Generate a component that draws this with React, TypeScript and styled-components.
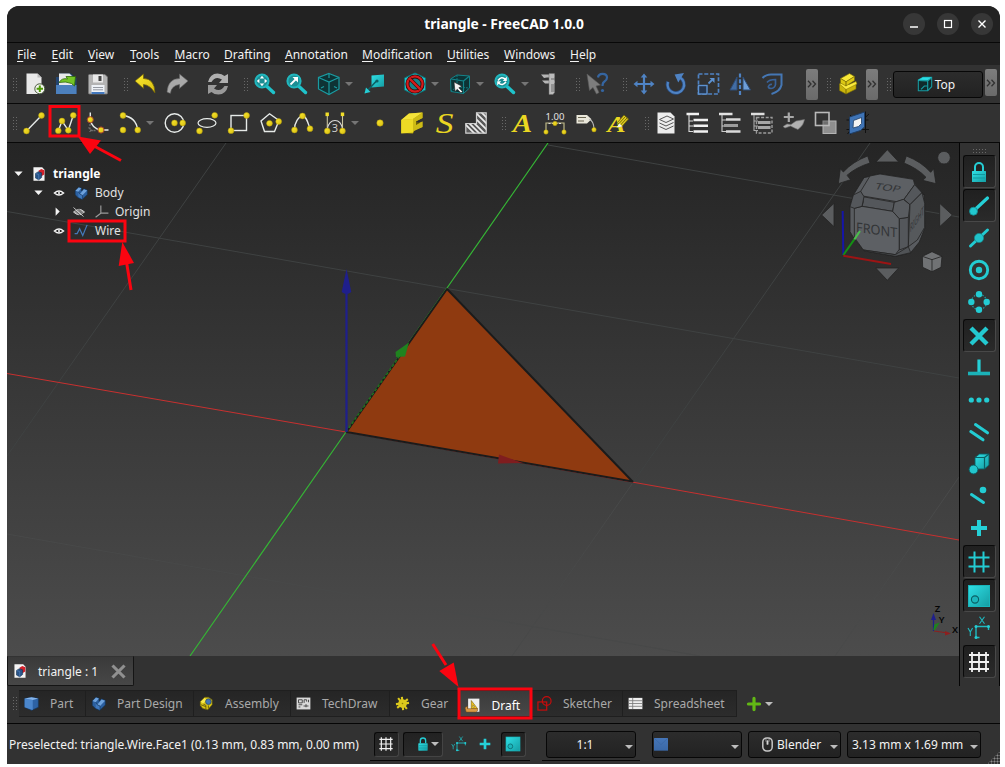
import React from "react";
import styled, { createGlobalStyle, css } from "styled-components";

const GlobalStyle = createGlobalStyle`
  html, body { margin: 0; padding: 0; background: #fff; }
  body { width: 1005px; height: 767px; overflow: hidden; }
  * { box-sizing: border-box; }
  svg { display: block; flex: none; }
`;

/* ---------- frame ---------- */
const Page = styled.div`
  position: relative;
  width: 1005px;
  height: 767px;
  padding: 6px 5px 3px 7px;
  background: #fff;
  font-family: "Noto Sans", sans-serif;
  font-size: 12px;
  color: #f2f2f2;
`;
const Window = styled.div`
  display: flex;
  flex-direction: column;
  width: 993px;
  height: 758px;
  background: #323232;
  border-radius: 12px 12px 0 0;
  overflow: hidden;
`;
const TitleBar = styled.header`
  display: grid;
  grid-template-columns: 1fr auto 1fr;
  align-items: center;
  height: 37px;
  background: #222;
  border-bottom: 1px solid #080808;
`;
const Title = styled.div`
  grid-column: 2;
  padding: 0 0 2px 1px;
  font-size: 13.8px;
  font-weight: 700;
  color: #fff;
`;
const WindowButtons = styled.div`
  display: flex;
  justify-content: flex-end;
  gap: 12px;
  padding-right: 7px;
`;
const RoundButton = styled.div`
  display: flex;
  align-items: center;
  justify-content: center;
  width: 22px;
  height: 22px;
  border-radius: 50%;
  background: #373737;
`;
const MenuBar = styled.nav`
  display: flex;
  align-items: center;
  height: 22px;
  padding-left: 10px;
  background: #232323;
`;
const MenuItem = styled.div<{ $w: number }>`
  width: ${(p) => p.$w}px;
  padding-top: 2px;
  font-size: 12px;
  white-space: nowrap;
  line-height: 22px;
  u { text-underline-offset: 2px; }
`;
const Toolbar = styled.div`
  display: flex;
  align-items: center;
  height: 39px;
  background: #323232;
  border-bottom: 1px solid #080808;
`;
const dots = css`
  background-image: radial-gradient(circle, #686868 0.7px, transparent 0.95px);
  background-size: 3px 3px;
`;
const Grip = styled.div<{ $gap: number }>`
  flex: none;
  width: 6px;
  height: 15px;
  margin-left: ${(p) => p.$gap}px;
  ${dots}
`;
const Slot = styled.div<{ $gap?: number }>`
  flex: none;
  display: flex;
  align-items: center;
  justify-content: center;
  width: 32px;
  height: 32px;
  margin-left: ${(p) => p.$gap ?? 0}px;
`;
const DropArrow = styled.span<{ $w?: number; $light?: boolean }>`
  flex: none;
  display: block;
  width: ${(p) => p.$w ?? 13}px;
  &::before {
    content: "";
    display: block;
    width: 0;
    border: 4px solid transparent;
    border-bottom-width: 0;
    border-top: 4px solid ${(p) => (p.$light ? "#bdbdbd" : "#757575")};
  }
`;
const Extender = styled.div<{ $gap: number; $lift?: number }>`
  flex: none;
  display: flex;
  align-items: center;
  justify-content: center;
  width: 12px;
  height: ${(p) => (p.$lift ? 27 : 31)}px;
  margin: 0 0 ${(p) => p.$lift ?? 0}px ${(p) => p.$gap}px;
  border-radius: 2px;
  background: linear-gradient(#7d7d7d, #6a6a6a);
`;
const raised = css`
  border: 1px solid #070707;
  border-radius: 3px;
  background: linear-gradient(#2c2c2c, #222);
`;
const ViewButton = styled.div`
  flex: none;
  display: flex;
  align-items: center;
  justify-content: center;
  gap: 2px;
  width: 90px;
  height: 27px;
  margin-left: 1px;
  padding-right: 4px;
  font-size: 12px;
  ${raised}
`;

/* ---------- centre ---------- */
const Middle = styled.div`
  display: flex;
  height: 543px;
`;
const Centre = styled.main`
  width: 952px;
`;
const Viewport = styled.div`
  position: relative;
  height: 513px;
  background: linear-gradient(#252525, #4c4c4c);
`;
const Tree = styled.div`
  position: absolute;
  left: 0;
  top: 21px;
`;
const TreeRow = styled.div<{ $indent: number; $bold?: boolean }>`
  display: flex;
  align-items: center;
  height: 19px;
  padding-left: ${(p) => p.$indent}px;
  font-size: 12px;
  font-weight: ${(p) => (p.$bold ? 700 : 400)};
  color: ${(p) => (p.$bold ? "#fff" : "#e2e2e2")};
`;
const TreeCell = styled.span<{ $w: number }>`
  display: flex;
  flex: none;
  align-items: center;
  justify-content: center;
  width: ${(p) => p.$w}px;
`;
const DocTabs = styled.div`
  display: flex;
  height: 30px;
  background: #323232;
`;
const DocTab = styled.div`
  display: flex;
  align-items: center;
  width: 127px;
  height: 30px;
  padding-left: 5px;
  background: linear-gradient(#3a3a3a, #474747);
  border: 1px solid #151515;
  border-top-color: #333;
  border-radius: 0 0 2px 2px;
  font-size: 12px;
`;
const DocName = styled.span`
  width: 72px;
  margin-left: 11px;
`;
const SnapBar = styled.aside`
  display: flex;
  flex-direction: column;
  width: 41px;
  padding: 5px 0 0 3px;
  background: #323232;
  border-left: 1px solid #050505;
  border-right: 1px solid #050505;
`;
const SideGrip = styled.div`
  width: 15px;
  height: 6px;
  margin-left: 9px;
  ${dots}
`;
const SnapButton = styled.div<{ $on?: boolean }>`
  flex: none;
  display: flex;
  align-items: center;
  justify-content: center;
  width: 33px;
  height: ${(p) => (p.$on ? 33 : 32)}px;
  margin-top: ${(p) => (p.$on ? 1 : 0)}px;
  padding-right: 1px;
  ${(p) =>
    p.$on &&
    css`
      border: 1px solid #0a0a0a;
      border-right-color: #484848;
      border-bottom-color: #484848;
      border-radius: 3px;
      background: linear-gradient(#202020, #2a2a2a);
    `}
`;

/* ---------- bottom ---------- */
const Workbenches = styled.div`
  display: flex;
  align-items: center;
  height: 38px;
  padding-bottom: 2px;
  border-bottom: 1px solid #050505;
`;
const BenchTabs = styled.div`
  display: flex;
  margin-left: 1px;
`;
const BenchTab = styled.div<{ $w: number; $active?: boolean }>`
  display: flex;
  align-items: center;
  width: ${(p) => p.$w}px;
  height: 27px;
  padding: ${(p) => (p.$active ? "3px 0 0 7px" : "0 0 0 5px")};
  gap: ${(p) => (p.$active ? 11.5 : 11)}px;
  border: 1px solid #1f1f1f;
  border-left-width: 0;
  background: ${(p) => (p.$active ? "linear-gradient(#3a3a3a, #484848)" : "linear-gradient(#252525, #2c2c2c)")};
  color: ${(p) => (p.$active ? "#fff" : "#a9a9a9")};
  font-size: 12px;
  white-space: nowrap;
`;
const AddBench = styled.div`
  display: flex;
  align-items: center;
  gap: 4px;
  margin-left: 10px;
`;
const StatusBar = styled.footer`
  position: relative;
  display: flex;
  height: 40px;
  padding-left: 2px;
  background: #323232;
`;
const Message = styled.div`
  width: 361px;
  line-height: 41px;
  letter-spacing: -0.01px;
  white-space: nowrap;
`;
const Group = styled.div<{ $w: number; $gap?: number; $line?: boolean }>`
  display: flex;
  align-items: center;
  width: ${(p) => p.$w}px;
  height: ${(p) => (p.$line ? 37 : 38)}px;
  margin-left: ${(p) => p.$gap ?? 0}px;
  padding: 4px 4px 0;
  border-bottom: 1px solid ${(p) => (p.$line ? "#070707" : "transparent")};
`;
const SmallButton = styled.div<{ $w: number; $gap?: number; $flat?: boolean; $menu?: boolean }>`
  flex: none;
  display: flex;
  align-items: center;
  justify-content: ${(p) => (p.$menu ? "flex-end" : "center")};
  width: ${(p) => p.$w}px;
  height: 25px;
  margin-left: ${(p) => p.$gap ?? 0}px;
  padding-right: ${(p) => (p.$menu ? 3 : 1)}px;
  border: 1px solid transparent;
  ${(p) =>
    !p.$flat &&
    css`
      border-color: #0a0a0a #444 #444 #0a0a0a;
      border-radius: 3px;
      background: linear-gradient(#222, #2a2a2a);
    `}
`;
const Combo = styled.div<{ $w: number; $gap?: number; $center?: boolean }>`
  flex: none;
  display: flex;
  align-items: center;
  width: ${(p) => p.$w}px;
  height: 27px;
  margin-left: ${(p) => p.$gap ?? 0}px;
  padding: 0 2px 0 4px;
  white-space: nowrap;
  ${raised}
  & > span:first-child { flex: 1; text-align: ${(p) => (p.$center ? "center" : "left")}; padding-right: ${(p) => (p.$center ? 6 : 0)}px; }
  & > span:last-child { padding-top: 5px; }
`;
const BlankLabel = styled.span`
  margin-left: -4px;
`;
const MouseLabel = styled.span`
  display: flex;
  align-items: center;
  gap: 2px;
  padding-left: 7px;
`;
const SizeGrip = styled.div`
  position: absolute;
  right: 0;
  bottom: 0;
  width: 13px;
  height: 13px;
  clip-path: polygon(100% 0, 100% 100%, 0 100%);
  background-image: radial-gradient(circle, #8a8a8a 0.9px, transparent 1.1px);
  background-size: 3px 3px;
`;
const Overlay = styled.svg`
  position: absolute;
  left: 0;
  top: 0;
  pointer-events: none;
`;

/* ---------- icons ---------- */
const W = "#e6eae8";
const C = "url(#cyan)";
const CD = "#0b5f64";
const B = "#4f83c4";
const dot = (x: number, y: number, r = 2.9) => (
  <circle key={`${x}-${y}`} cx={x} cy={y} r={r} fill="url(#yellow)" stroke="#b39a08" strokeWidth=".5" />
);
const stroke = (d: string, c = W, w = 1.4, extra = {}) => <path d={d} fill="none" stroke={c} strokeWidth={w} {...extra} />;

const planeCube = (
  <>
    <path d="M2.500 7L9 3L21.500 4V16L15.500 21.500L3 19.500Z" fill="#0d3335" stroke="#148389" />
    <path d="M3 7L15.500 9V21.500M15.500 9L21.500 4" fill="none" stroke="#148389" strokeWidth="1.200" />
    <path d="M9 3v12l-6 4M9 15l12 1" fill="none" stroke="#118085" strokeWidth=".9" strokeDasharray="2 1" />
  </>
);
const lens = (
  <>
    <path d="M13.500 14L20.500 20.500" stroke="#1fc3cb" strokeWidth="3.400" strokeLinecap="round" />
    <circle cx="9" cy="9" r="6.600" fill="#1b8e94" stroke="#21b6bd" strokeWidth="2" />
  </>
);
const miniLock = (
  <>
    <path d="M8 11V7a4 4 0 0 1 8 0v4" fill="none" stroke="#25cdd4" strokeWidth="2" />
    <rect x="5" y="11" width="14" height="11" rx=".6" fill={C} />
    <path d="M6 14.500h12M6 18h12" stroke="#11999f" strokeWidth="1" />
  </>
);
const hash = (c: string, w: number) => stroke("M7.500 1.500V22.500M16.500 1.500V22.500M1.500 7.500H22.500M1.500 16.500H22.500", c, w);
const grid3 = stroke("M5 2V22M12 2V22M19 2V22M2 5H22M2 12H22M2 19H22", "#f1f1f1", 1.8);
const wpDims = (
  <>
    {stroke("M9 21.500V10.500H21.500V14M9 21.500h3.500", "#1fb9c0", 1.4)}
    <circle cx="9" cy="10.500" r="1.500" fill="#25cdd4" />
    <circle cx="21.500" cy="10.500" r="1.500" fill="#25cdd4" />
    <circle cx="9" cy="21.500" r="1.500" fill="#25cdd4" />
    {stroke("M12.500 .8L17.500 7.800M17.500 .8L12.500 7.800M1 12l2.300 4M5.600 12L3.300 16V20", "#1fb9c0", 1.1)}
  </>
);
const plane = (
  <>
    <rect x="1.500" y="1.500" width="21" height="21" fill={C} stroke="#19b5bb" strokeWidth="1" />
    <circle cx="8" cy="15.500" r="3.600" fill="#1cb6bc" stroke={CD} strokeWidth="1.100" />
  </>
);
const blueBody = (
  <>
    <path d="M2 8L8 2l5 1.500v5l4-4 6 2.500v7.500l-9 8.500-7-3-5-5Z" fill="#2b5f9f" stroke="#12304f" strokeWidth="1" />
    <path d="M2.500 8L8 2.500l4.500 1.500-5 6Z M10 14l7-8.500 5.500 2-8 8.500Z" fill="#6ea2dc" />
    <path d="M7.500 10l2.500 4 4.500 2v6.500l-7-3.500Z" fill="#3f78bd" />
    <path d="M14.500 16v6.500M7.500 10l2.500 4 4.500 2" fill="none" stroke="#12304f" strokeWidth=".9" />
  </>
);
const docIcon = (
  <>
    <path d="M2.500 .5h15l4 4v19h-19Z" fill="#f4f4f4" />
    <path d="M11 6.500l5-3 5 2v7.500l-5 3Z" fill="#d4202a" />
    <path d="M6 11l5-3 5.500 2v8l-5 4L6 19Z" fill="#28548a" stroke="#132e4c" />
    <path d="M6 11l5.500 2v9" fill="none" stroke="#5d8cc4" />
  </>
);
const eye = (
  <>
    <path d="M1 12Q12 2.500 23 12Q12 21.500 1 12Z" fill="#111" stroke="#f3f3f3" strokeWidth="3.400" />
    <circle cx="12" cy="12" r="2.600" fill="#f3f3f3" />
  </>
);

const icons: Record<string, React.ReactNode> = {
  newDoc: (
    <>
      <path d="M4.500 1.500H15.500L19.500 5.500V22H4.500Z" fill="#e9e9e9" />
      <path d="M15.500 1.500v4h4Z" fill="#bcbcbc" />
      <circle cx="17.800" cy="16.800" r="5" fill="#f3f5ef" stroke="#4a5a3f" />
      <path d="M17.800 13.600v6.400M14.600 16.800h6.400" stroke="#4e9a06" strokeWidth="2" />
    </>
  ),
  open: (
    <>
      <path d="M2 5h3V1.500h12l3 3V6h2.500v16H2Z" fill="#23446f" />
      <path d="M5 1.500H15.500l3 3v9H5Z" fill="#e8e8e8" />
      <path d="M2 13h20.500v9H2Z" fill="#4c80bd" />
      <path d="M5 10.500Q8 5.500 13.500 7L12 4.500H21.500L20.500 14L17.500 11.500Q12 9 5 10.500Z" fill="#73c425" stroke="#2e6708" strokeWidth=".8" />
    </>
  ),
  save: (
    <>
      <path d="M2.500 3.500a1 1 0 0 1 1-1H19l2.500 2.500V21a1 1 0 0 1-1 1h-17a1 1 0 0 1-1-1Z" fill="#b3b3b3" stroke="#777" strokeWidth=".8" />
      <rect x="7" y="2.500" width="10" height="8" fill="#e9e9e9" />
      <rect x="12.500" y="4" width="3" height="5" fill="#444" />
      <rect x="5.500" y="13" width="13" height="9" fill="#eef2f7" />
      <path d="M7 15.500h10M7 17.800h10" stroke="#8a9099" strokeWidth=".9" />
      <path d="M5.500 21h13" stroke="#4378bd" strokeWidth="2" />
    </>
  ),
  undo: <path d="M2 9L10.500 2V6.500Q21.500 6.500 22 21Q17 13 10.500 12.500V16.500Z" fill="url(#yellow)" stroke="#6c5d06" strokeWidth=".7" />,
  redo: <path d="M23 9L14.500 2V6.500Q3 6.500 2 20Q6 22 5.500 21Q6.500 13.500 14.500 12.500V16.500Z" fill="#a9a9a9" stroke="#5f5f5f" strokeWidth=".6" />,
  refresh: (
    <>
      <path d="M2 10Q4 1.500 11.500 1.500Q16 1.500 18.500 4L22 2V11H13L16 7.500Q9.500 3.500 5.500 10Z" fill="#b0b0b0" />
      <path d="M22 14Q20 22.500 12.500 22.500Q8 22.500 5.500 20L2 22V13H11L8 16.500Q14.500 20.500 18.500 14Z" fill="#999" />
    </>
  ),
  fitAll: (
    <>
      {lens}
      <path d="M9 3.800l2.200 2.600H6.800ZM9 14.200l2.200-2.600H6.800ZM3.800 9l2.600-2.200v4.400ZM14.200 9l-2.600-2.200v4.400Z" fill="#fff" />
    </>
  ),
  fitSel: (
    <>
      {lens}
      <path d="M5.500 12.500L11 7" stroke="#fff" strokeWidth="1.800" />
      <path d="M7.500 5H13v5.500Z" fill="#fff" />
    </>
  ),
  isoCube: (
    <>
      <path d="M12 1.500L22 5.500V17L12 22.500L1.500 17V5.500Z" fill="#0f3335" stroke="#1a9ba1" strokeWidth="1.200" />
      <path d="M1.500 5.500L12 10L22 5.500M12 10V22.500" fill="none" stroke="#1a9ba1" strokeWidth="1.200" />
      <path d="M12 2v4M4 16l3-1.500M20 16l-3-1.500" stroke="#1a9ba1" strokeWidth="1.200" />
    </>
  ),
  linkGo: (
    <>
      <path d="M9.500 3.500L22 2.500V14.500L9.500 15.500Z" fill={C} />
      <path d="M3 21L14.500 9" stroke={CD} strokeWidth="1.500" />
      <path d="M2.500 21.500l1.500-6 4.500 4.500Z" fill="#25cdd4" />
      <circle cx="15" cy="9" r="1.600" fill={CD} />
    </>
  ),
  drawStyle: (
    <>
      <path d="M12 1L22.500 6V18L12 23L1.500 18V6Z" fill="#1fc0c8" stroke="#0d7479" />
      <circle cx="12" cy="12" r="7.600" fill="#158388" stroke="#3d0808" strokeWidth="4" />
      <circle cx="12" cy="12" r="7.600" fill="none" stroke="#d41c1c" strokeWidth="2.200" />
      <path d="M6.800 6.800L17.200 17.200" stroke="#3d0808" strokeWidth="3.600" />
      <path d="M6.600 6.600L17.400 17.400" stroke="#d41c1c" strokeWidth="2.200" />
    </>
  ),
  boxSelect: (
    <>
      {planeCube}
      <path d="M6 10l1 9.500 2.300-2.200 3.700 3.700 1.500-1.500-3.700-3.700 3.200-1.500Z" fill="#f1f1f1" stroke="#222" strokeWidth=".6" />
    </>
  ),
  syncView: (
    <>
      {lens}
      <path d="M5 8.500q3.500-5 7.500-1M13 9.700q-3.500 5-7.500 1" fill="none" stroke="#fff" strokeWidth="1.600" />
      <path d="M13.800 4.500v4.500h-4ZM4.200 13.500V9.200h4Z" fill="#fff" />
    </>
  ),
  caliper: (
    <>
      <path d="M3 2.500H16.500V5.500H9L6 6ZM4 8.500H17V11L10 11.500H7Z" fill="#b5b5b5" />
      <path d="M11 1.500H16.500V20.500L15 22.500H11Z" fill="#bcbcbc" stroke="#6d6d6d" strokeWidth=".5" />
      <path d="M13 7h3M13 13h3M13 15h3M13 17h3M13 19h3" stroke="#555" strokeWidth=".8" />
    </>
  ),
  whatsThis: (
    <>
      <path d="M2 2L4.500 18.500L8 15.500L11.500 22L14 20.500L11 14L15.500 13Z" fill="#7d7d7d" stroke="#5b5b5b" strokeWidth=".6" />
      <path d="M13 5.500Q13.500 1.800 17.500 1.800Q22 1.800 22 5.500Q22 8 19.500 9.500Q17.500 10.700 17.500 14" fill="none" stroke="#3565a0" strokeWidth="2.200" />
      <circle cx="17.500" cy="18.500" r="1.600" fill="#3565a0" />
    </>
  ),
  move: (
    <>
      <path d="M12 4V20M4 12H20" stroke={B} strokeWidth="2.200" />
      <path d="M12 1.500l3.300 4H8.700ZM12 22.500l3.300-4H8.700ZM1.500 12l4-3.300v6.600ZM22.500 12l-4-3.300v6.600Z" fill={B} />
    </>
  ),
  rotate: (
    <>
      <path d="M16 5.500A8.300 8.300 0 1 1 4 9.500" fill="none" stroke="#2b4d7e" strokeWidth="3.600" />
      <path d="M16 5.500A8.300 8.300 0 1 1 4 10" fill="none" stroke={B} strokeWidth="2.200" />
      <path d="M11 2H20.500L13.500 10.500Z" fill={B} transform="rotate(-8 14 5)" />
    </>
  ),
  scale: (
    <>
      <rect x="2.500" y="2" width="20" height="20" fill="none" stroke={B} strokeWidth="1.700" strokeDasharray="4 1.800" />
      <rect x="2.500" y="13.500" width="8.500" height="8.500" fill="#26364d" stroke="#5d92d2" strokeWidth="1.400" />
      <path d="M12.500 11.500L16 8" stroke="#5d92d2" strokeWidth="1.800" />
      <path d="M13.500 6H18.500V11Z" fill="#5d92d2" />
    </>
  ),
  mirror: (
    <>
      <path d="M12 1.500V23" stroke={B} strokeWidth="2.200" strokeDasharray="4 1.800" />
      <path d="M9 5V18H2Z" fill="#426da5" stroke="#2d4c77" />
      <path d="M15 5V18H22.500Z" fill="#6e9ed8" stroke="#2d4c77" />
    </>
  ),
  offset: (
    <>
      <path d="M2.500 6Q6 2.500 11 2.500H21.500V13Q20 19.500 11.500 22" fill="none" stroke="#4577b4" strokeWidth="2" />
      <path d="M7 10.500Q9 7.500 15.500 7.500V12.500Q15 16 11 16.500Q7 16 9 13.500Q10 12 12 12.500" fill="none" stroke="#39639a" strokeWidth="1.700" />
    </>
  ),
  yellowParts: (
    <>
      <path d="M3.500 12L10 14.500V22L3.500 18.500ZM10 14.500L20 9.500V17L10 22Z" fill="#c9b40c" stroke="#7a6c05" strokeWidth=".6" />
      <path d="M3.500 12L6.500 10L13 12.500L20 9.500L21 12L10 17.500Z" fill="#fbea3b" stroke="#7a6c05" strokeWidth=".5" />
      <path d="M4.500 6.500L13.500 1.500L18.500 4.500L10 9.800Z" fill="#f8e838" stroke="#7a6c05" strokeWidth=".6" />
      <path d="M4.500 6.500L10 9.800V14L4.500 11ZM10 9.800L18.500 4.500V8.500L10 14Z" fill="#dcc814" stroke="#7a6c05" strokeWidth=".6" />
    </>
  ),
  line: <>{stroke("M4.500 20L19.500 4.500")}{dot(4.5, 20)}{dot(19.5, 4.5)}</>,
  wire: <>{stroke("M4.300 19.700L8 10L14.300 19.300L19.300 4.300")}{dot(4.3, 19.7)}{dot(8, 10)}{dot(14.3, 19.3)}{dot(19.3, 4.3)}</>,
  fillet: (
    <>
      {stroke("M4.300 1.500V8.700Q6 18 15 19H22.500")}
      {stroke("M4 13V21M4 19.500H11M2.500 16.500l5 4", "#6e6e6e", 1.3, { strokeDasharray: "2 1.5" })}
      {dot(4.3, 8.7)}{dot(15, 19)}
      <circle cx="4.300" cy="8.700" r="3.100" fill="none" stroke="#a33" strokeWidth=".8" />
      <circle cx="15" cy="19" r="3.100" fill="none" stroke="#a33" strokeWidth=".8" />
    </>
  ),
  arc: <>{stroke("M5 4.500Q18 6 19.700 19")}{dot(5, 4.5)}{dot(5, 19)}{dot(19.7, 19)}</>,
  circle: <><circle cx="11.500" cy="12" r="9.300" fill="none" stroke={W} strokeWidth="1.400" />{dot(11.5, 12)}{dot(19.7, 12)}</>,
  ellipse: <><ellipse cx="12" cy="12" rx="9" ry="4.300" fill="none" stroke={W} strokeWidth="1.200" />{dot(4.5, 20)}{dot(19.7, 4.3)}</>,
  rect: <><rect x="4" y="4.500" width="15.500" height="15" fill="none" stroke={W} strokeWidth="1.400" />{dot(4, 19.7)}{dot(19.6, 4.5)}</>,
  polygon: <>{stroke("M10.500 2.800L20 9.500L15.500 20.500H5.500L2 10Z")}{dot(10.5, 12.3)}{dot(19.7, 10.5)}</>,
  bspline: <>{stroke("M3.500 19C3 12 8 5 11.500 5C15.500 5 17 12 19 17.700")}{dot(3.5, 19)}{dot(11.5, 5)}{dot(19, 17.7)}</>,
  bezier: (
    <>
      {stroke("M4.300 4V20M19.500 4V20", "#c9c4a0", 1.1)}
      {stroke("M4.300 18Q6 9.500 12 9.500Q18 9.500 19.500 18", "#dcdcdc", 1.2)}
      <rect x="2.500" y="1.500" width="3.400" height="3.600" fill="#f2de28" />
      <rect x="17.800" y="1.500" width="3.400" height="3.600" fill="#f2de28" />
      <text x="12" y="21" textAnchor="middle" fontSize="11" fill="#ccc" fontFamily="Noto Sans">3</text>
      {dot(4.3, 20)}{dot(19.5, 20)}
    </>
  ),
  point: dot(12, 12, 3.2),
  faceBinder: (
    <>
      <path d="M1.200 9L9 2.500L22.500 1.500V7L16 10V13L22.500 10.500V16L14.500 19L13 22.500L1.200 22Z" fill="#b8a40a" />
      <path d="M1.200 9L13 8V21.500L1.200 22.500Z" fill="#eedb25" />
      <path d="M1.200 9L9 2.500L22.500 1.500L13 8Z" fill="#f3e23a" />
      <path d="M13 8L22.500 1.500V7L16 10.500V14L22.500 10.500V16L13 20.500Z" fill="#cdbb16" />
      <path d="M16 10.500V14L19.500 12Z" fill="#6b5e08" />
    </>
  ),
  shapeString: <text transform="translate(12.500 22) scale(1.180 1)" textAnchor="middle" fontFamily="Liberation Serif, serif" fontStyle="italic" fontSize="30" fill="#e9d622">S</text>,
  hatch: (
    <>
      <clipPath id="ell"><path d="M12.500 1.500H22.500V22.500H1.500V12.500H12.500Z" /></clipPath>
      <g clipPath="url(#ell)">
        <rect width="24" height="24" fill="#5a5a5a" />
        <path d="M0 7l18 18M0 12l13 13M0 2l24 24M4 0l24 24M9-1l20 20M14-2l16 16" stroke="#ededed" strokeWidth="1.700" />
      </g>
      <path d="M12.500 1.800H22.200V22.200H1.800V12.500H12.500Z" fill="none" stroke="#cfcfcf" strokeWidth="1.200" />
    </>
  ),
  text: <text transform="translate(11.500 20.500) scale(1.120 1)" textAnchor="middle" fontFamily="Liberation Serif, serif" fontStyle="italic" fontWeight="700" fontSize="26" fill="#ead722">A</text>,
  dimension: (
    <>
      <text x="12" y="8.500" textAnchor="middle" fontSize="9.500" fill="#e4e4e4" fontFamily="Noto Sans">1.00</text>
      {stroke("M3 21V12H21V21", "#bfb988", 1.2)}
      {stroke("M5.500 12.500H18.500", "#ddd", 1, { strokeDasharray: "2 1.500" })}
      {dot(3, 21, 2.2)}{dot(21, 21, 2.2)}{dot(12, 12.5, 2.2)}
    </>
  ),
  label: (
    <>
      <path d="M1.500 4H12L16.500 8.300L12 12.500H1.500Z" fill="#e9e7da" />
      <path d="M3 6.500h8M3 10h6" stroke="#6a6550" strokeWidth="1.100" />
      {stroke("M14 8.300Q19 10 19 18.500", "#bbb", 1.2)}
      {dot(19, 18.7, 2.2)}
    </>
  ),
  annoStyle: (
    <>
      <text transform="translate(9.500 20.500) scale(1.150 1)" textAnchor="middle" fontFamily="Liberation Serif, serif" fontStyle="italic" fontWeight="700" fontSize="24" fill="#ead722">A</text>
      <path d="M10.500 11.500L17 4L21.500 8L14.500 16Z" fill="#e0cd1f" stroke="#6b5e08" strokeWidth=".8" />
      <path d="M12 12.500l6.500-7M13.500 14l6.500-7" stroke="#6b5e08" strokeWidth=".9" />
      <path d="M9.500 16.500l3-4 3 3Z" fill="#f2f2f2" />
    </>
  ),
  layers: (
    <>
      <path d="M3.500 1.500H16.500L20.500 5.500V22.500H3.500Z" fill="#ececec" />
      <path d="M5.500 8.500l7.500-3.500 6.500 3-7.500 3.500ZM5.500 12l6.500 3 7.500-3.500M5.500 15.500l6.500 3 7.500-3.500" fill="none" stroke="#555" strokeWidth="1" />
    </>
  ),
  tree1: (
    <>
      <path d="M.5 3H13" stroke="#f1f1f1" strokeWidth="2.600" />
      {stroke("M3 4V20.500H7M3 10H7M3 15H7", "#ddd", 1.1)}
      <path d="M7.500 9H22M7.500 14.800H22M7.500 20.500H22" stroke="#f1f1f1" strokeWidth="2.600" />
    </>
  ),
  tree2: (
    <>
      <path d="M1 3H14.500" stroke="#e2e2e2" strokeWidth="2.600" />
      {stroke("M4 4V20.500H8M4 9H8M4 15H6", "#ccc", 1.1)}
      <path d="M8 8.500H22.500M8 20.500H22.500" stroke="#dadada" strokeWidth="2.600" />
      <path d="M6 14.500H20" stroke="#9c9c9c" strokeWidth="3.200" />
    </>
  ),
  tree3: (
    <>
      <path d="M1 3H14.500" stroke="#dedede" strokeWidth="2.600" />
      {stroke("M4 4V19.500H8M4 10H8M4 15H8", "#aaa", 1.1)}
      <rect x="6.500" y="6.500" width="15.500" height="15.500" fill="none" stroke="#9c9c9c" strokeWidth="1.400" strokeDasharray="3 1.600" />
      <path d="M8 11.500H20.500M8 16.500H20.500" stroke="#a6a6a6" strokeWidth="2.800" />
    </>
  ),
  addGroup: (
    <>
      <path d="M6.800 1.500V11M1.800 6H11.800" stroke="#a8a8a8" strokeWidth="2.200" />
      <path d="M1 15.500L5 13L9 13.500L14 10L22.500 8.500Q22 14 16 18.500L12.500 17L8.500 15L3 17Z" fill="#b0b0b0" stroke="#6e6e6e" strokeWidth=".6" />
    </>
  ),
  selGroup: (
    <>
      <rect x="9" y="10" width="13" height="12.500" fill="#8f8f8f" stroke="#b5b5b5" />
      <rect x="1.500" y="1.500" width="13.500" height="13" fill="#323232" fillOpacity=".35" stroke="#b9b9b9" strokeWidth="1.600" />
    </>
  ),
  proxy: (
    <>
      {stroke("M4.500 4V23.500M19.500 .5V22M.5 18.500H23M7.500 15L1.500 23M23 3L16.500 9M.5 9H22.500", "#111", 1)}
      <path d="M3.500 6L18.500 1V16L14.500 19.500L3.500 23Z" fill="#3f74b6" stroke="#1f3d63" />
      <path d="M7.500 9.500L15.500 6.500V12.500L12.500 15.500L7 17Z" fill="#f4f4f4" stroke="#1f3d63" strokeWidth=".8" />
    </>
  ),
  lock: miniLock,
  snapEnd: <><path d="M6.500 17L20.500 4" stroke="#25d0d7" strokeWidth="3.200" strokeLinecap="round" /><circle cx="6.500" cy="17.200" r="4" fill="#22c8cf" stroke="#128b90" strokeWidth=".8" /></>,
  snapMid: <><path d="M3.500 20L20.500 4" stroke="#22cbd2" strokeWidth="3" strokeLinecap="round" /><circle cx="12" cy="12" r="4.600" fill="#20c2c9" stroke="#12898e" strokeWidth=".7" /></>,
  snapCenter: <><circle cx="12" cy="12" r="8.700" fill="none" stroke="#23ccd3" strokeWidth="2.900" /><circle cx="12" cy="12" r="3.200" fill="#22c8cf" /></>,
  snapAngle: (
    <>
      <circle cx="12" cy="12" r="7.600" fill="none" stroke="#1b9fa5" strokeWidth="1.200" strokeDasharray="1.500 1.500" />
      {[[12, 4.3], [12, 19.7], [4.3, 12], [19.7, 12]].map(([x, y]) => <circle key={`${x}-${y}`} cx={x} cy={y} r="3.200" fill="#23ccd3" />)}
    </>
  ),
  snapX: <path d="M4 4L20 20M20 4L4 20" stroke="#23c9d0" strokeWidth="4.400" />,
  snapPerp: <><path d="M12 3.500V17" stroke="#25d0d7" strokeWidth="3.200" /><path d="M1 17.500H23" stroke="#1bb2b8" strokeWidth="3.600" /></>,
  snapExt: <>{[4.3, 12, 19.7].map((x) => <circle key={x} cx={x} cy="12" r="2.600" fill="#23ccd3" />)}</>,
  snapPar: <path d="M8.500 4.500L20.500 12.800M3.800 11.500L16 19.800" stroke="#23ccd3" strokeWidth="3" strokeLinecap="round" />,
  snapSpecial: (
    <>
      <path d="M8 5.500L12.500 2H22V13L17.500 17H8Z" fill={C} stroke={CD} strokeWidth=".9" />
      <path d="M8 5.500H17.500V17M17.500 5.500L22 2" fill="none" stroke={CD} strokeWidth="1.200" />
      <circle cx="6.500" cy="17.500" r="4.400" fill="#23c6cd" stroke={CD} strokeWidth=".9" />
    </>
  ),
  snapNear: <><path d="M4.500 10.500L16.500 18.500" stroke="#23ccd3" strokeWidth="3" strokeLinecap="round" /><circle cx="16" cy="6" r="3.300" fill="#23ccd3" /></>,
  snapOrtho: <path d="M12 4V20M4 12H20" stroke="#25d0d7" strokeWidth="4" />,
  snapGrid: hash("#23ccd3", 2),
  snapPlane: plane,
  snapDims: wpDims,
  gridToggle: grid3,
  part: (
    <>
      <path d="M1 4L12 2L23 4V18L12 23L1 18Z" fill="#2d62a4" stroke="#173557" />
      <path d="M1 4L14 6.500V22.500L1 18Z" fill="#4b86cb" />
      <path d="M1 4L12 2L23 4L14 6.500Z" fill="#85b4ea" />
    </>
  ),
  partDesign: blueBody,
  assembly: (
    <>
      <path d="M2 9L9 2L15 2L21 6V14L14 22L6 20L2 15Z" fill="#d9c517" stroke="#6b5e08" />
      <path d="M2.500 9L9 3l3 3-5 6Z" fill="#f7ea4c" />
      <circle cx="15" cy="9" r="4.500" fill="#4477b4" stroke="#23405f" />
      <path d="M7 13l4 2v6M15 15v5M3 14l8 3" stroke="#6b5e08" strokeWidth="1.500" fill="none" />
    </>
  ),
  techDraw: (
    <>
      <rect x="1" y="2.500" width="22" height="19" fill="#d9d9d9" />
      <path d="M4 6h6v5H4zM4 14h6M13 6v5M13 6h4v3M4 17.500h3M16 13v5M12 16h8M20 6v4" fill="none" stroke="#444" strokeWidth="1.500" />
    </>
  ),
  gear: (
    <>
      <circle cx="12" cy="12" r="7" fill="#dcc91c" />
      <path d="M11 1.500L13 22.500M1.500 13L22.500 11M5 3.500L19 20.500M20.500 5L3.500 19" stroke="#dcc91c" strokeWidth="3.400" />
      <circle cx="12" cy="12" r="1.300" fill="#8c7e08" />
    </>
  ),
  draft: (
    <>
      <rect x="5" y="1" width="18" height="21" fill="#efefef" />
      <path d="M10 4V17H20Z" fill="#f1c522" stroke="#7d6208" />
      <path d="M12.500 11v3.500h3Z" fill="#efefef" stroke="#7d6208" strokeWidth=".8" />
      <path d="M0 15.500L4 13V17H20V20.500L17 22.500H2Z" fill="#d99a45" stroke="#7a4b12" strokeWidth=".8" />
    </>
  ),
  sketcher: <><rect x="1.500" y="9.500" width="14" height="13" fill="none" stroke="#c80c0c" strokeWidth="1.900" /><circle cx="15.500" cy="8" r="7" fill="none" stroke="#c80c0c" strokeWidth="1.900" /></>,
  sheet: (
    <>
      <rect x="1" y="3" width="22" height="18" fill="#eee" />
      <path d="M1 7.500H23M1 12H23M1 16.500H23M7.500 3V21" stroke="#777" strokeWidth="1.300" />
    </>
  ),
  add: <path d="M12 2.500V21.500M2.500 12H21.500" stroke="#62b815" strokeWidth="5.500" strokeLinecap="round" />,
  topCube: (
    <>
      <path d="M2 6L9 2H22V16L16 22H2Z" fill="#10292b" stroke="#179ba1" strokeWidth="1.600" />
      <path d="M2 6L9 2H22L16 8L2 7.500Z" fill="#29dde4" />
      <path d="M2 6.500L16 7V22M22 3L16 7M6 20l5-5h4" fill="none" stroke="#179ba1" strokeWidth="1.800" />
    </>
  ),
  close: <path d="M3.500 3.500L20.500 20.500M20.500 3.500L3.500 20.500" stroke="#909090" strokeWidth="4.400" />,
  doc: docIcon,
  eye,
  eyeOff: (
    <>
      <path d="M1 12Q12 1 23 12Q12 23 1 12Z" fill="#ababab" stroke="#c8c8c8" strokeWidth="2" />
      <path d="M3 3L22 20M7 2l14 14M3 8l14 13" stroke="#2a2a2a" strokeWidth="1.400" />
      <path d="M1 3l20 18" stroke="#e8e8e8" strokeWidth="1.600" />
    </>
  ),
  origin: stroke("M10 1V14H23M10 14L1 21", "#9b9b9b", 2),
  wireSmall: stroke("M1 17H5L9 9L14 20L21 3", "#4478b8", 2),
  openArrow: <path d="M1 6.500H23L12 18.500Z" fill="#f4f4f4" />,
  closedArrow: <path d="M7 1V23L18 12Z" fill="#f4f4f4" />,
  mouse: (
    <>
      <rect x="4.500" y="1.500" width="15" height="21" rx="6.500" fill="none" stroke="#c6c6c6" strokeWidth="2.400" />
      <path d="M12 6.500V11" stroke="#d3d3d3" strokeWidth="3" strokeLinecap="round" />
      <path d="M9.500 3v4.500M14.500 3v4.500" stroke="#d3d3d3" strokeWidth="1" />
    </>
  ),
  envelope: (
    <>
      <rect x="1.500" y="1.500" width="21" height="19" fill="url(#steel)" />
      <path d="M1.500 1.500L12 11.500L22.500 1.500" fill="none" stroke="#35639f" strokeWidth=".8" />
    </>
  ),
};
const Icon = ({ name, size = 24 }: { name: string; size?: number }) => (
  <svg width={size} height={size} viewBox="0 0 24 24" overflow="visible">{icons[name]}</svg>
);
const Chevrons = () => (
  <svg width="10" height="8" viewBox="0 0 10 8"><path d="M1 .8L4 4L1 7.200M5.500 .8L8.500 4L5.500 7.200" fill="none" stroke="#303030" strokeWidth="1.300" /></svg>
);

/* ---------- data ---------- */
const menus: [string, number][] = [
  ["File", 34.5], ["Edit", 36.5], ["View", 42], ["Tools", 44.5], ["Macro", 49.5], ["Drafting", 61],
  ["Annotation", 77], ["Modification", 85], ["Utilities", 57], ["Windows", 66], ["Help", 40],
];
type Tool = { icon?: string; gap?: number; grip?: number; drop?: boolean };
const mainTools: Tool[] = [
  { grip: 5 }, { icon: "newDoc" }, { icon: "open" }, { icon: "save" },
  { grip: 9 }, { icon: "undo" }, { icon: "redo" }, { icon: "refresh", gap: 9 },
  { grip: 9 }, { icon: "fitAll" }, { icon: "fitSel" }, { icon: "isoCube", drop: true }, { icon: "linkGo" },
  { icon: "drawStyle", gap: 9, drop: true }, { icon: "boxSelect", drop: true }, { icon: "syncView", drop: true }, { icon: "caliper" },
  { grip: 9 }, { icon: "whatsThis" },
  { grip: 9 }, { icon: "move" }, { icon: "rotate" }, { icon: "scale" }, { icon: "mirror" }, { icon: "offset" },
];
const draftTools: Tool[] = [
  { grip: 5 }, { icon: "line" }, { icon: "wire" }, { icon: "fillet" }, { icon: "arc", drop: true }, { icon: "circle" },
  { icon: "ellipse" }, { icon: "rect" }, { icon: "polygon" }, { icon: "bspline" }, { icon: "bezier", drop: true },
  { icon: "point" }, { icon: "faceBinder" }, { icon: "shapeString" }, { icon: "hatch" },
  { grip: 9 }, { icon: "text" }, { icon: "dimension" }, { icon: "label" }, { icon: "annoStyle" },
  { grip: 9 }, { icon: "layers" }, { icon: "tree1" }, { icon: "tree2" }, { icon: "tree3" }, { icon: "addGroup" }, { icon: "selGroup" }, { icon: "proxy" },
];
const snaps: [string, boolean][] = [
  ["lock", true], ["snapEnd", true], ["snapMid", false], ["snapCenter", false], ["snapAngle", false], ["snapX", true],
  ["snapPerp", false], ["snapExt", false], ["snapPar", false], ["snapSpecial", false], ["snapNear", false], ["snapOrtho", false],
  ["snapGrid", true], ["snapPlane", true], ["snapDims", false], ["gridToggle", true],
];
const benches: [string, string, number][] = [
  ["Part", "part", 67], ["Part Design", "partDesign", 108], ["Assembly", "assembly", 97], ["TechDraw", "techDraw", 99],
  ["Gear", "gear", 68], ["Draft", "draft", 74], ["Sketcher", "sketcher", 91], ["Spreadsheet", "sheet", 114],
];

const ToolRun = ({ tools }: { tools: Tool[] }) => (
  <>
    {tools.map((t, i) =>
      t.grip !== undefined ? (
        <Grip key={i} $gap={t.grip} />
      ) : (
        <React.Fragment key={i}>
          <Slot $gap={t.gap}><Icon name={t.icon!} /></Slot>
          {t.drop && <DropArrow />}
        </React.Fragment>
      )
    )}
  </>
);

const NavCube = () => (
  <g transform="translate(800 140) scale(.33333)" stroke="#242424" strokeWidth="2.500" strokeLinejoin="round">
    <g fill="#5b5d5f">
      <path d="M262 29L296 66H228Z" /><path d="M262 421L296 384H227Z" />
      <path d="M65 225L102 190V260Z" /><path d="M457 225L419 190V260Z" />
      <circle cx="432" cy="53" r="19" />
      <path d="M203 48L210 69Q168 82 141 106L152 119L115 131L121 86L130 96Q158 65 203 48Z" />
      <path d="M319 48L312 69Q354 86 378 112L368 121L408 131L401 86L392 97Q364 65 319 48Z" />
    </g>
    <path d="M240 102L322 114L345 133L372 165L374 265L358 306L332 338L286 349L195 333L165 300L150 275V200L160 165L192 113Z" fill="#595c60" />
    <g fill="#5d6064">
      <path d="M210 108L240 102L340 118L344 134L312 178L290 185L188 168L182 154Z" />
      <path d="M188 170L283 187L278 214L186 199L190 185Z" fill="#54575b" />
      <path d="M163 205L186 199L278 214L298 236V328L286 344L190 330L163 292Z" />
      <path d="M298 236L325 232V320L298 330Z" fill="#54575b" />
      <path d="M283 187L310 178L330 194L325 232L298 236L278 214Z" fill="#595c60" />
      <path d="M344 134L372 165L366 158L330 194L312 178Z" fill="#54575b" />
      <path d="M330 194L366 158L374 190V262L352 300L325 320Z" fill="#56595c" />
      <path d="M190 330L286 344L325 320L332 338L286 349L195 333Z" fill="#505356" />
      <path d="M182 154L192 170L186 199L163 205L150 200L160 165Z" fill="#54575b" />
    </g>
    <g stroke="none" fill="#333537" fontFamily="Noto Sans, sans-serif" textAnchor="middle">
      <text transform="matrix(1 .13 -.35 .75 260 152)" fontSize="34" textLength="76" lengthAdjust="spacingAndGlyphs">TOP</text>
      <text transform="matrix(1 .14 0 1 230 284)" fontSize="40" textLength="124" lengthAdjust="spacingAndGlyphs">FRONT</text>
      <text transform="matrix(.45 -.62 0 1 351 250)" fontSize="34" textLength="92" lengthAdjust="spacingAndGlyphs">RIGHT</text>
    </g>
    <g fill="none" strokeWidth="6">
      <path d="M128 213L130 345" stroke="#1515a8" />
      <path d="M130 345L163 298" stroke="#149014" /><path d="M163 298L180 273" stroke="#4cc04c" />
      <path d="M130 347L273 372" stroke="#9c1414" />
    </g>
    <path d="M367 349L396 335L426 349L423 382L396 395L368 382Z" fill="#707274" />
    <path d="M367 349L396 359L426 349M396 359V395" fill="none" />
  </g>
);

const Scene = () => (
  <svg width="952" height="513" viewBox="7 143 952 513">
    <g stroke="#3f4242" strokeWidth="1" fill="none">
      <path d="M7 211.500L447 288.500L959 378" /><path d="M548 145L959 217" />
      <path d="M226 143L7 456" /><path d="M870 143L632 484" />
      <path d="M632 484L512 656" stroke="#484949" />
      <path d="M959 477L835 656" stroke="#494a4a" /><path d="M7 534L700 656" stroke="#484949" />
    </g>
    <path d="M7 373.500L346 432L632 482L959 540" stroke="#c8302f" fill="none" />
    <path d="M548 143L447 288L346 432L190 656" stroke="#35b435" fill="none" strokeWidth="1.200" />
    <path d="M346.500 432L447 289L632.500 481.500Z" fill="#8f3a10" stroke="#1b1b1b" strokeWidth="2" strokeLinejoin="round" />
    <path d="M346 432L404 350" stroke="#1f7a1f" strokeWidth="1.200" strokeDasharray="3 2" />
    <path d="M395.500 352L409 342.500L405 356.500L396 357Z" fill="#1f831f" />
    <path d="M499 454.500L523 463L498 463.500Z" fill="#7f1d1f" />
    <path d="M346.500 432V285" stroke="#1f1f8c" strokeWidth="2.200" />
    <path d="M346.500 269L351.300 292Q346.500 296 341.700 292Z" fill="#1f1f8c" />
    <NavCube />
    <path d="M933.500 631V617" stroke="#1f1f8c" strokeWidth="1.200" /><path d="M933.500 613L936 620H931Z" fill="#1f1f8c" />
    <path d="M934 631L948 633" stroke="#8c1f1f" strokeWidth="1.200" /><path d="M951 633.500L945 631V635.500Z" fill="#8c1f1f" />
    <path d="M934 630L938 624L935 625Z" stroke="#1f831f" fill="#1f831f" strokeWidth="1.500" />
    <g fill="#050505" fontFamily="Noto Sans, sans-serif" fontSize="9.500" fontWeight="600" textAnchor="middle">
      <text x="937.500" y="612">Z</text><text x="941.500" y="623">Y</text><text x="955" y="633">X</text>
    </g>
  </svg>
);

const Annotations = () => (
  <Overlay width="1005" height="767">
    <g fill="none" stroke="#fb0410" strokeWidth="3">
      <rect x="50" y="106.500" width="29" height="29.500" />
      <rect x="69" y="221" width="56" height="20" />
      <rect x="459" y="689" width="72" height="29" />
      <path d="M94 146L121 160.500M126.500 262L131 290M446 665L432.700 644" />
    </g>
    <g fill="#fb0410">
      <path d="M78 136.500L101 140.500L90 154Z" />
      <path d="M122.300 242L134 263L118.700 266Z" />
      <path d="M458.500 687L453.700 662.500L439.300 671Z" />
    </g>
  </Overlay>
);

export default function App() {
  return (
    <Page>
      <GlobalStyle />
      <Window>
        <TitleBar>
          <Title>triangle - FreeCAD 1.0.0</Title>
          <WindowButtons>
            <RoundButton><svg width="10" height="10"><path d="M1 8H9" stroke="#fff" strokeWidth="1.300" /></svg></RoundButton>
            <RoundButton><svg width="10" height="10"><rect x="1.500" y="1.500" width="7" height="7" fill="none" stroke="#fff" strokeWidth="1.200" /></svg></RoundButton>
            <RoundButton><svg width="10" height="10"><path d="M1.500 1.500L8.500 8.500M8.500 1.500L1.500 8.500" stroke="#fff" strokeWidth="1.400" /></svg></RoundButton>
          </WindowButtons>
        </TitleBar>
        <MenuBar>
          {menus.map(([m, w]) => (
            <MenuItem key={m} $w={w}><u>{m[0]}</u>{m.slice(1)}</MenuItem>
          ))}
        </MenuBar>
        <Toolbar>
          <ToolRun tools={mainTools} />
          <Extender $gap={18}><Chevrons /></Extender>
          <Grip $gap={8} />
          <Slot><Icon name="yellowParts" /></Slot>
          <Extender $gap={2}><Chevrons /></Extender>
          <Grip $gap={8} />
          <ViewButton><Icon name="topCube" size={16} />Top</ViewButton>
          <Extender $gap={2} $lift={3}><Chevrons /></Extender>
        </Toolbar>
        <Toolbar><ToolRun tools={draftTools} /></Toolbar>
        <Middle>
          <Centre>
            <Viewport>
              <Scene />
              <Tree>
                <TreeRow $indent={5} $bold>
                  <TreeCell $w={12}><Icon name="openArrow" size={9} /></TreeCell>
                  <TreeCell $w={29}><Icon name="doc" size={14} /></TreeCell>triangle
                </TreeRow>
                <TreeRow $indent={25}>
                  <TreeCell $w={13}><Icon name="openArrow" size={9} /></TreeCell>
                  <TreeCell $w={28}><Icon name="eye" size={10} /></TreeCell>
                  <TreeCell $w={15}><Icon name="partDesign" size={14} /></TreeCell>
                  <TreeCell $w={7} />Body
                </TreeRow>
                <TreeRow $indent={44}>
                  <TreeCell $w={13}><Icon name="closedArrow" size={9} /></TreeCell>
                  <TreeCell $w={30}><Icon name="eyeOff" size={12} /></TreeCell>
                  <TreeCell $w={16}><Icon name="origin" size={14} /></TreeCell>
                  <TreeCell $w={5} />Origin
                </TreeRow>
                <TreeRow $indent={45}>
                  <TreeCell $w={14}><Icon name="eye" size={10} /></TreeCell>
                  <TreeCell $w={8} />
                  <TreeCell $w={15}><Icon name="wireSmall" size={15} /></TreeCell>
                  <TreeCell $w={6} />Wire
                </TreeRow>
              </Tree>
            </Viewport>
            <DocTabs>
              <DocTab>
                <Icon name="doc" size={14} />
                <DocName>triangle : 1</DocName>
                <Icon name="close" size={17} />
              </DocTab>
            </DocTabs>
          </Centre>
          <SnapBar>
            <SideGrip />
            {snaps.map(([name, on]) => (
              <SnapButton key={name} $on={on}><Icon name={name} /></SnapButton>
            ))}
          </SnapBar>
        </Middle>
        <Workbenches>
          <Grip $gap={5} />
          <BenchTabs>
            {benches.map(([label, icon, w]) => (
              <BenchTab key={label} $w={w} $active={label === "Draft"}>
                <Icon name={icon} size={15} />{label}
              </BenchTab>
            ))}
          </BenchTabs>
          <AddBench><Icon name="add" size={14} /><DropArrow $w={8} $light /></AddBench>
        </Workbenches>
        <StatusBar>
          <Message>Preselected: triangle.Wire.Face1 (0.13 mm, 0.83 mm, 0.00 mm)</Message>
          <Group $w={160} $line>
            <SmallButton $w={25}><Icon name="gridToggle" size={16} /></SmallButton>
            <SmallButton $w={40} $gap={4} $menu><Icon name="lock" size={16} /><DropArrow $w={8} $light /></SmallButton>
            <SmallButton $w={26} $gap={3} $flat><Icon name="snapDims" size={16} /></SmallButton>
            <SmallButton $w={26} $flat><Icon name="snapOrtho" size={16} /></SmallButton>
            <SmallButton $w={25} $gap={3}><Icon name="snapPlane" size={16} /></SmallButton>
          </Group>
          <Group $w={98} $gap={12} $line>
            <Combo $w={90} $center><span>1:1</span><DropArrow $w={8} $light /></Combo>
          </Group>
          <Group $w={340} $gap={8}>
            <Combo $w={90}><BlankLabel><Icon name="envelope" size={16} /></BlankLabel><DropArrow $w={8} $light /></Combo>
            <Combo $w={93} $gap={6}><MouseLabel><Icon name="mouse" size={15} />Blender</MouseLabel><DropArrow $w={8} $light /></Combo>
            <Combo $w={134} $gap={6}><span>3.13 mm x 1.69 mm</span><DropArrow $w={8} $light /></Combo>
          </Group>
          <SizeGrip />
        </StatusBar>
      </Window>
      <Annotations />
      <svg width="0" height="0">
        <defs>
          <linearGradient id="cyan" x1="0" y1="0" x2="1" y2="1"><stop offset="0" stopColor="#2fe0e6" /><stop offset="1" stopColor="#159da3" /></linearGradient>
          <linearGradient id="steel" x1="0" y1="0" x2="0" y2="1"><stop offset="0" stopColor="#4676b8" /><stop offset="1" stopColor="#3a68a6" /></linearGradient>
          <linearGradient id="yellow" x1="0" y1="0" x2="1" y2="1"><stop offset="0" stopColor="#fbe92f" /><stop offset="1" stopColor="#d8be12" /></linearGradient>
        </defs>
      </svg>
    </Page>
  );
}
